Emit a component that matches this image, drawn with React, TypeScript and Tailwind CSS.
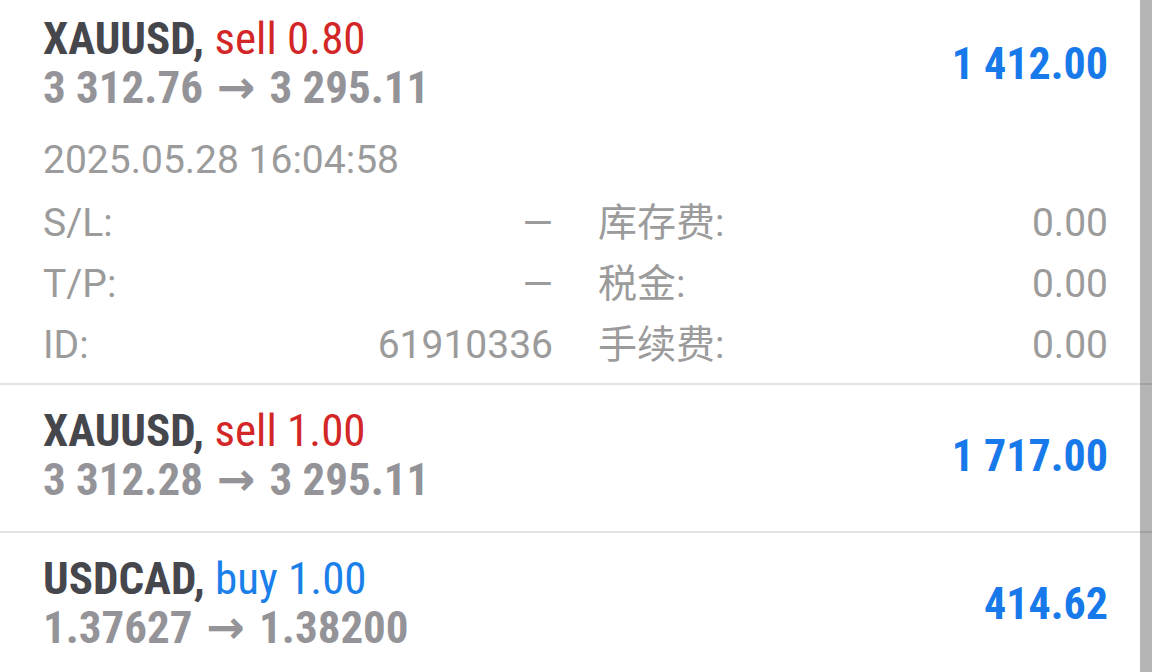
import React from 'react';

type Deal = {
  symbol: string;
  side: 'buy' | 'sell';
  volume: string;
  open: string;
  close: string;
  profit: string;
  expanded?: boolean;
};

const DEALS: Deal[] = [
  { symbol: 'XAUUSD', side: 'sell', volume: '0.80', open: '3 312.76', close: '3 295.11', profit: '1 412.00', expanded: true },
  { symbol: 'XAUUSD', side: 'sell', volume: '1.00', open: '3 312.28', close: '3 295.11', profit: '1 717.00' },
  { symbol: 'USDCAD', side: 'buy', volume: '1.00', open: '1.37627', close: '1.38200', profit: '414.62' },
];

const condensed = "font-['Roboto_Condensed',Roboto,'Liberation_Sans_Narrow',sans-serif]";

const DealHeader: React.FC<{ deal: Deal }> = ({ deal }) => (
  <div className={`flex items-center justify-between ${condensed}`}>
    <div className="flex flex-col">
      <div className="text-[45px] leading-[48px] whitespace-nowrap">
        <span className="font-bold text-[#46464d]">{deal.symbol},</span>{' '}
        <span className={deal.side === 'sell' ? 'text-[#d32626]' : 'text-[#1a7fea]'}>
          {deal.side} {deal.volume}
        </span>
      </div>
      <div className="text-[45px] leading-[48px] font-bold text-[#939398] whitespace-nowrap">
        {deal.open}
        <span className="mx-[14px] font-['DejaVu_Sans',sans-serif] text-[46px]">→</span>
        {deal.close}
      </div>
    </div>
    <div className="text-[44px] leading-[48px] font-bold text-[#1779ea]">{deal.profit}</div>
  </div>
);

const DETAILS: [string, string, string, string][] = [
  ['S/L:', '—', '库存费:', '0.00'],
  ['T/P:', '—', '税金:', '0.00'],
  ['ID:', '61910336', '手续费:', '0.00'],
];

const DealDetails: React.FC = () => (
  <div className="font-['Roboto','Noto_Sans_CJK_SC',sans-serif] text-[39px] text-[#9b9b9b]">
    <div className="h-[63px] leading-[61px] mt-[18px]">2025.05.28 16:04:58</div>
    <div className="grid grid-cols-2 gap-x-[45px]">
      {DETAILS.map(([l1, v1, l2, v2]) => (
        <React.Fragment key={l1}>
          <div className="flex justify-between h-[61px] leading-[61px]">
            <span>{l1}</span>
            <span>{v1}</span>
          </div>
          <div className="flex justify-between h-[61px] leading-[61px]">
            <span>{l2}</span>
            <span>{v2}</span>
          </div>
        </React.Fragment>
      ))}
    </div>
  </div>
);

export default function App() {
  return (
    <div className="relative w-[1152px] h-[672px] overflow-hidden bg-white">
      <div className="flex flex-col">
        {DEALS.map((deal, i) => (
          <div
            key={i}
            className={`pl-[43px] pr-[44px] ${deal.expanded ? 'pt-[15px] pb-[7px]' : 'pt-[22px] pb-[27px]'} ${i < DEALS.length - 1 ? 'border-b-2 border-[#e3e3e3]' : ''}`}
          >
            <DealHeader deal={deal} />
            {deal.expanded && <DealDetails />}
          </div>
        ))}
      </div>
      {/* overlay scrollbar */}
      <div className="absolute top-0 right-0 bottom-0 w-[12px] bg-black/[0.29]" />
    </div>
  );
}
